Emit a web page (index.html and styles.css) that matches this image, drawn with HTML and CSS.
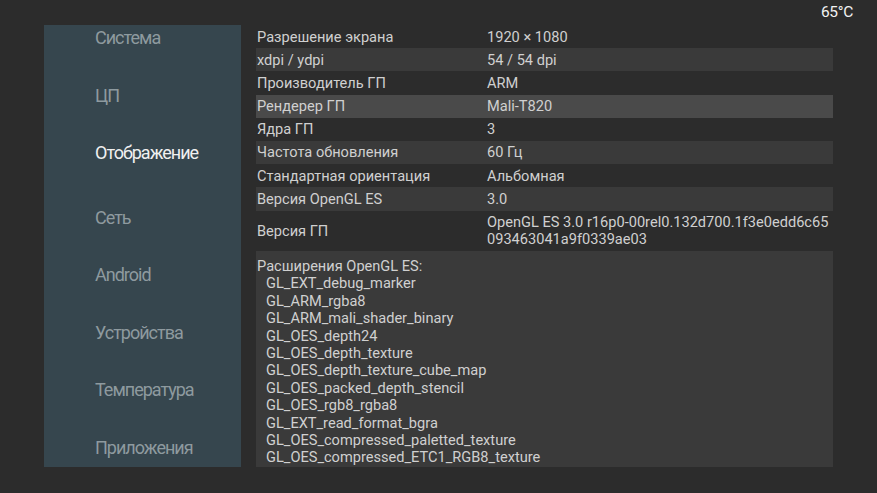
FILE: index.html
```html
<!DOCTYPE html>
<html lang="ru">
<head>
<meta charset="utf-8">
<title>Отображение</title>
<link rel="stylesheet" href="styles.css">
</head>
<body>
<header class="status"><span class="temp">65°C</span></header>
<main class="layout">
  <nav class="sidebar">
    <div class="nav-item">Система</div>
    <div class="nav-item">ЦП</div>
    <div class="nav-item active">Отображение</div>
    <div class="nav-item">Сеть</div>
    <div class="nav-item">Android</div>
    <div class="nav-item">Устройства</div>
    <div class="nav-item">Температура</div>
    <div class="nav-item">Приложения</div>
  </nav>
  <section class="table">
    <div class="row"><div class="label">Разрешение экрана</div><div class="value">1920 × 1080</div></div>
    <div class="row alt"><div class="label">xdpi / ydpi</div><div class="value">54 / 54 dpi</div></div>
    <div class="row"><div class="label">Производитель ГП</div><div class="value">ARM</div></div>
    <div class="row focus"><div class="label">Рендерер ГП</div><div class="value">Mali-T820</div></div>
    <div class="row"><div class="label">Ядра ГП</div><div class="value">3</div></div>
    <div class="row alt"><div class="label">Частота обновления</div><div class="value">60 Гц</div></div>
    <div class="row"><div class="label">Стандартная ориентация</div><div class="value">Альбомная</div></div>
    <div class="row alt"><div class="label">Версия OpenGL ES</div><div class="value">3.0</div></div>
    <div class="row tall"><div class="label">Версия ГП</div><div class="value multi">OpenGL ES 3.0 r16p0-00rel0.132d700.1f3e0edd6c65<br>093463041a9f0339ae03</div></div>
    <div class="row alt ext">
      <div class="ext-title">Расширения OpenGL ES:</div>
      <ul class="ext-list">
        <li>GL_EXT_debug_marker</li>
        <li>GL_ARM_rgba8</li>
        <li>GL_ARM_mali_shader_binary</li>
        <li>GL_OES_depth24</li>
        <li>GL_OES_depth_texture</li>
        <li>GL_OES_depth_texture_cube_map</li>
        <li>GL_OES_packed_depth_stencil</li>
        <li>GL_OES_rgb8_rgba8</li>
        <li>GL_EXT_read_format_bgra</li>
        <li>GL_OES_compressed_paletted_texture</li>
        <li>GL_OES_compressed_ETC1_RGB8_texture</li>
      </ul>
    </div>
  </section>
</main>
</body>
</html>
```
FILE: styles.css
```css
* { box-sizing: border-box; }
html, body { margin: 0; padding: 0; }
body {
  width: 877px;
  height: 493px;
  overflow: hidden;
  background: #2c2c2c;
  font-family: Roboto, "Noto Sans", "DejaVu Sans", sans-serif;
  color: #d0d0d0;
}
.status {
  height: 25px;
  display: flex;
  justify-content: flex-end;
  padding-right: 24px;
}
.temp {
  font-size: 15.5px;
  line-height: 25px;
  color: #f2f2f2;
  letter-spacing: -0.3px;
}
.layout {
  display: flex;
  padding-left: 44px;
}
.sidebar {
  width: 197px;
  height: 442px;
  background: #36464e;
  padding: 2px 0 0 51px;
  display: flex;
  flex-direction: column;
  gap: 35.5px;
}
.nav-item {
  font-size: 18px;
  line-height: 22px;
  height: 22px;
  color: #8e9a9f;
  white-space: nowrap;
  letter-spacing: -1px;
}
.nav-item.active {
  color: #f0f0f0;
  margin-bottom: 7px;
}
.table {
  margin-left: 15px;
  width: 577px;
  display: flex;
  flex-direction: column;
  font-size: 14.6px;
}
.row {
  display: flex;
  align-items: center;
  height: 23.2px;
  line-height: 23.2px;
  padding-top: 1px;
}
.row.alt { background: #3a3a3a; }
.row.focus { background: #4a4a4a; }
.label {
  width: 231px;
  padding-left: 1px;
  white-space: nowrap;
}
.value { white-space: nowrap; }
.value.multi { line-height: 17px; }
.row.tall { height: 40.5px; }
.row.ext {
  height: 216px;
  display: block;
  padding: 7px 0 0 1px;
  line-height: 17.4px;
}
.ext-list {
  list-style: none;
  margin: 0;
  padding: 0 0 0 9px;
}
```
